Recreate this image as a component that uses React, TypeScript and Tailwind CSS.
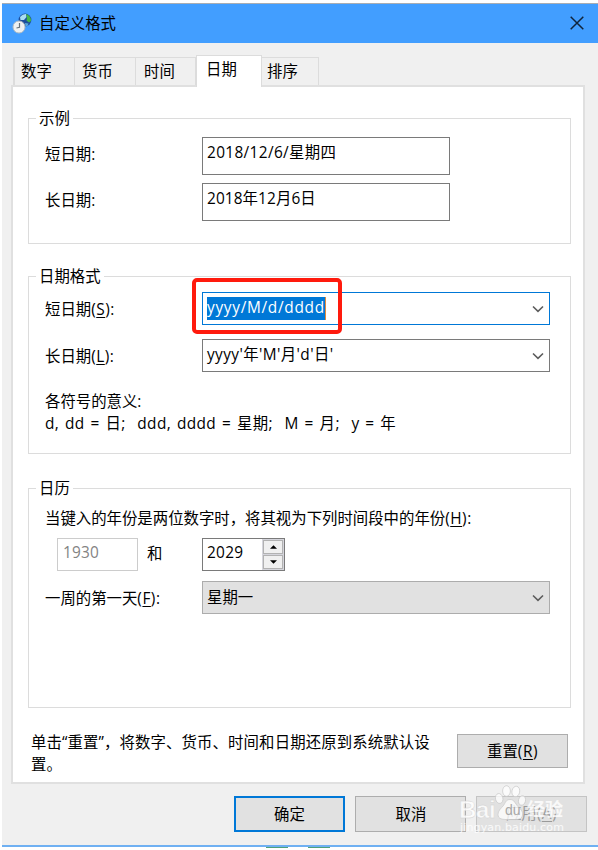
import type { ReactNode } from 'react';
import clsx from 'clsx';

const TABS = [
  { label: '数字', box: 'w-[62px] pl-[6px] border-l-2' },
  { label: '货币', box: 'w-[61px] pl-[7px]' },
  { label: '时间', box: 'w-[60px] pl-[8px]' },
  { label: '日期', box: 'w-[66px] pl-[9px]', active: true },
  { label: '排序', box: 'w-[57px] pl-[5px]' },
];

function GlobeClock() {
  return (
    <svg className="w-[20px] h-[21px] shrink-0" viewBox="0 0 20 21">
      <circle cx="13" cy="7" r="6.4" fill="#1d4f9c" />
      <path d="M8 4 Q10.500 .8 14 1 L14.500 4 12 7 8.500 7Z" fill="#a9def2" />
      <path d="M14 1 Q19 2.500 19 8 L17 9.500 14.500 7.500 15 5Z" fill="#43b649" />
      <path d="M13 10 L16.500 10.500 15.500 13 13.500 13Z" fill="#59a9dd" />
      <circle cx="7" cy="14" r="6" fill="#eef1f2" stroke="#b3bcc2" />
      <path d="M7.500 10 V14.300 L4.500 15" fill="none" stroke="#66727a" strokeWidth="1.200" />
    </svg>
  );
}

function Chevron() {
  return (
    <svg className="w-[12px] h-[8px] shrink-0" viewBox="0 0 12 8">
      <path d="M1 1.500 L6 6.300 L11 1.500" fill="none" stroke="#5c5c5c" strokeWidth="1.600" />
    </svg>
  );
}

function Group({ title, className, children }: { title: string; className: string; children: ReactNode }) {
  return (
    <fieldset className={clsx('w-[543px] ml-[15px] border-[1.5px] border-[#dcdcdc] min-w-0', className)}>
      <legend className="h-[20px] leading-[21px] ml-[7px] px-[3px]">{title}</legend>
      {children}
    </fieldset>
  );
}

function Row({ label, hotkey, className, children }: { label: string; hotkey?: string; className: string; children: ReactNode }) {
  return (
    <div className={clsx('flex pl-[16px]', className)}>
      <div className="w-[157px] shrink-0 pt-[7px]">
        {label}
        {hotkey && <Hotkey k={hotkey} />}:
      </div>
      {children}
    </div>
  );
}

function Hotkey({ k }: { k: string }) {
  return (
    <span className="tracking-[0.5px]">
      (<span className="underline underline-offset-2 decoration-1">{k}</span>)
    </span>
  );
}

function Combo({ className, children }: { className: string; children: ReactNode }) {
  return (
    <div className={clsx('flex items-center justify-between w-[348px] h-[33px] border pl-[4px] pr-[5px]', className)}>
      {children}
      <Chevron />
    </div>
  );
}

function Button({ className, children }: { className: string; children: ReactNode }) {
  return (
    <button className={clsx('flex items-center justify-center w-[111px] bg-[#e1e1e1] shrink-0', className)}>
      {children}
    </button>
  );
}

// translucent logo over the last button
function Watermark() {
  return (
    <div className="absolute left-[458px] top-[782px] w-[120px] h-[58px] text-white/80 pointer-events-none">
      <svg className="absolute left-[36px] top-[3px] w-[32px] h-[36px]" viewBox="0 0 32 36" fill="#ffffff" fillOpacity=".75" stroke="#c8c8c8" strokeWidth=".7">
        <ellipse cx="5.200" cy="13.500" rx="3.700" ry="5" transform="rotate(-12 5.200 13.500)" />
        <ellipse cx="12.500" cy="6" rx="3.900" ry="5.300" />
        <ellipse cx="21.800" cy="6.500" rx="3.900" ry="5.300" transform="rotate(10 21.800 6.500)" />
        <ellipse cx="28" cy="15.500" rx="3.500" ry="4.800" transform="rotate(14 28 15.500)" />
        <path d="M16 14.500 C20.500 14.500 21 18.500 24 21.500 C27 24.500 29 26.500 28.500 30 C28 34.500 24 34.800 16 34.500 C8 34.800 4 34 4 29.500 C4 25.500 7 23.500 9.500 20.500 C11.500 17.500 12 14.500 16 14.500Z" />
      </svg>
      <span className="absolute left-[1px] top-[12px] text-[24px] leading-[32px] tracking-[-0.3px] font-bold font-['Liberation_Sans',sans-serif] [-webkit-text-stroke:0.4px_#d0d0d0]">Bai</span>
      <span className="absolute left-[47px] top-[18px] text-[14px] leading-[20px] text-[#a8a8a8] font-['Liberation_Sans',sans-serif]">du</span>
      <span className="absolute left-[69px] top-[14px] text-[18px] leading-[26px] font-bold">经验</span>
      <span className="absolute left-[2px] top-[39px] text-[11px] leading-[14px] tracking-[0.15px] font-['DejaVu_Sans',sans-serif]">
        jingyan.baidu.com
      </span>
    </div>
  );
}

export default function App() {
  return (
    <div className="relative w-[598px] h-[850px] overflow-hidden bg-white pl-[2px] pt-[3px] text-black text-[15.4px] leading-[22px] whitespace-nowrap font-['Open_Sans','Noto_Sans_CJK_SC',sans-serif]">
      <div className="flex flex-col h-[844px] bg-[#f0f0f0] border-b-2 border-[#6fb0f2]">
        {/* Title bar */}
        <div className="flex items-center h-[40px] shrink-0 bg-[#429eff] border-t border-[#a8adb3] pl-[10px] pr-[14px]">
          <GlobeClock />
          <span className="ml-[7px]">自定义格式</span>
          <svg className="ml-auto mb-[2px] w-[14px] h-[14px]" viewBox="0 0 14 14">
            <path d="M.7 .7 L13.300 13.300 M13.300 .7 L.7 13.300" stroke="#10243b" strokeWidth="1.500" />
          </svg>
        </div>

        {/* Tabs */}
        <div className="flex items-end h-[44px] shrink-0 pl-[11px] mb-[-2px] z-10">
          {TABS.map((tab) => (
            <div
              key={tab.label}
              className={clsx(
                'border-[#dcdcdc] border-t-[1.5px] border-r-[1.5px]',
                tab.box,
                tab.active ? 'h-[32px] bg-white pt-[3px] border-l-[1.5px]' : 'h-[28px] mb-[2px] pt-[3px]',
              )}
            >
              {tab.label}
            </div>
          ))}
        </div>

        {/* Page */}
        <div className="flex flex-col w-[574px] h-[699px] shrink-0 ml-[9px] bg-white border-2 border-[#e0e0e0]">
          <Group title="示例" className="mt-[21px] h-[136px]">
            <Row label="短日期" className="pt-[9px]">
              <div className="w-[248px] h-[38px] border border-[#7a7a7a] pl-[4px] pt-[4px] tracking-[0.35px]">2018/12/6/星期四</div>
            </Row>
            <Row label="长日期" className="pt-[8px]">
              <div className="w-[248px] h-[38px] border border-[#7a7a7a] pl-[4px] pt-[4px] tracking-[0.1px]">2018年12月6日</div>
            </Row>
          </Group>

          <Group title="日期格式" className="mt-[22px] h-[188px]">
            <Row label="短日期" hotkey="S" className="pt-[6px]">
              <Combo className="border-[#0078d7]">
                <span className="bg-[#0078d7] text-white h-[23px] border-r border-[#e08a3c] tracking-[0.7px]">yyyy/M/d/dddd</span>
              </Combo>
            </Row>
            <Row label="长日期" hotkey="L" className="pt-[14px]">
              <Combo className="border-[#7a7a7a]">
                <span className="pb-[2px] tracking-[0.4px]">yyyy'年'M'月'd'日'</span>
              </Combo>
            </Row>
            <div className="pl-[16px] pt-[19px]">各符号的意义:</div>
            <div className="pl-[16px] whitespace-pre tracking-[0.4px] [word-spacing:1.4px]">d, dd = 日;  ddd, dddd = 星期;  M = 月;  y = 年</div>
          </Group>

          <Group title="日历" className="mt-[24px] h-[230px]">
            <div className="pl-[16px] pt-[10px]">
              当键入的年份是两位数字时，将其视为下列时间段中的年份
              <Hotkey k="H" />:
            </div>
            <div className="flex pl-[28px] pt-[8px]">
              <div className="w-[81px] h-[33px] border border-[#cccccc] pl-[5px] pt-[3px] text-[#838383] tracking-[0.2px]">1930</div>
              <span className="w-[64px] pl-[9px] pt-[5px]">和</span>
              <div className="flex w-[83px] h-[33px] border border-[#7a7a7a] pl-[4px]">
                <span className="pt-[3px] tracking-[0.3px]">2029</span>
                <div className="flex flex-col ml-auto w-[22px] p-px gap-px bg-[#d5d5dc]">
                  <div className="flex-1 flex items-center justify-center bg-[#f0f0f0] border border-[#b2b2b2]">
                    <svg className="w-[7px] h-[4px]" viewBox="0 0 8 4"><path d="M4 0 L8 4 H0Z" /></svg>
                  </div>
                  <div className="flex-1 flex items-center justify-center bg-[#f0f0f0] border border-[#b2b2b2]">
                    <svg className="w-[7px] h-[4px]" viewBox="0 0 8 4"><path d="M4 4 L8 0 H0Z" /></svg>
                  </div>
                </div>
              </div>
            </div>
            <Row label="一周的第一天" hotkey="F" className="pt-[10px]">
              <Combo className="border-[#acacac] bg-[#e1e1e1]">
                <span>星期一</span>
              </Combo>
            </Row>
          </Group>

          <div className="flex pl-[18px] pt-[24px]">
            <p className="w-[426px] tracking-[0.12px]">
              单击“重置”，将数字、货币、时间和日期还原到系统默认设
              <br />
              置。
            </p>
            <Button className="border border-[#adadad] h-[34px] mt-[2px] pt-[2px]">
              重置
              <Hotkey k="R" />
            </Button>
          </div>
        </div>

        <div className="flex gap-[10px] pl-[232px] pt-[12px]">
          <Button className="border-2 border-[#0078d7] h-[36px] pt-px">确定</Button>
          <Button className="border border-[#adadad] h-[36px] pt-px pl-px">取消</Button>
          <Button className="border border-[#c4c4c4] bg-[#cccccc] text-[#9a9a9a] h-[36px]">
            应用
            <Hotkey k="A" />
          </Button>
        </div>
      </div>
      <div className="flex gap-[20px] pl-[264px]">
        <div className="w-[22px] h-px bg-[#4fa07a]" />
        <div className="w-[22px] h-px bg-[#4fa07a]" />
      </div>

      {/* Highlight around the short date format */}
      <div className="absolute left-[192px] top-[278px] w-[150px] h-[56px] border-4 border-[#ff1a0d] rounded-[5px]" />
      <Watermark />
    </div>
  );
}
